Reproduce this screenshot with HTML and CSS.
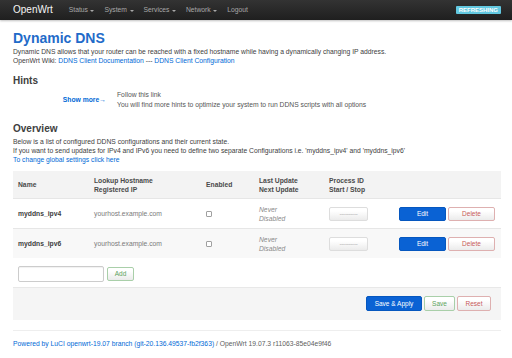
FILE: index.html
```html
<!DOCTYPE html>
<html lang="en">
<head>
<meta charset="utf-8">
<title>Dynamic DNS - OpenWrt</title>
<link rel="stylesheet" href="styles.css">
</head>
<body>
<header class="topbar">
  <div class="topbar-inner">
    <a class="brand" href="#">OpenWrt</a>
    <ul class="nav">
      <li class="nav-item">Status<span class="caret"></span></li>
      <li class="nav-item">System<span class="caret"></span></li>
      <li class="nav-item">Services<span class="caret"></span></li>
      <li class="nav-item">Network<span class="caret"></span></li>
      <li class="nav-item">Logout</li>
    </ul>
    <span class="badge">REFRESHING</span>
  </div>
</header>

<main class="container">
  <h2 class="page-title">Dynamic DNS</h2>
  <div class="text-block">
    <div>Dynamic DNS allows that your router can be reached with a fixed hostname while having a dynamically changing IP address.</div>
    <div>OpenWrt Wiki: <a href="#">DDNS Client Documentation</a> --- <a href="#">DDNS Client Configuration</a></div>
  </div>

  <h3 class="section-title hints-title">Hints</h3>
  <div class="hint-row">
    <div class="hint-label"><a href="#" class="strong-link">Show more→</a></div>
    <div class="hint-field">
      <div>Follow this link</div>
      <div class="hint-desc">You will find more hints to optimize your system to run DDNS scripts with all options</div>
    </div>
  </div>

  <h3 class="section-title overview-title">Overview</h3>
  <div class="text-block overview-text">
    <div>Below is a list of configured DDNS configurations and their current state.</div>
    <div>If you want to send updates for IPv4 and IPv6 you need to define two separate Configurations i.e. 'myddns_ipv4' and 'myddns_ipv6'</div>
    <div><a href="#">To change global settings click here</a></div>
  </div>

  <table class="ddns-table">
    <colgroup>
      <col class="c-name"><col class="c-host"><col class="c-en"><col class="c-upd"><col class="c-pid"><col class="c-act">
    </colgroup>
    <thead>
      <tr class="head-row">
        <th>Name</th>
        <th>Lookup Hostname<br>Registered IP</th>
        <th>Enabled</th>
        <th>Last Update<br>Next Update</th>
        <th>Process ID<br>Start / Stop</th>
        <th></th>
      </tr>
    </thead>
    <tbody>
      <tr class="row">
        <td class="name">myddns_ipv4</td>
        <td class="muted">yourhost.example.com</td>
        <td><input type="checkbox" class="check"></td>
        <td class="state">Never<br>Disabled</td>
        <td><button class="btn btn-pid">----------</button></td>
        <td class="actions"><button class="btn btn-primary btn-edit">Edit</button><button class="btn btn-remove btn-del">Delete</button></td>
      </tr>
      <tr class="row alt">
        <td class="name">myddns_ipv6</td>
        <td class="muted">yourhost.example.com</td>
        <td><input type="checkbox" class="check"></td>
        <td class="state">Never<br>Disabled</td>
        <td><button class="btn btn-pid">----------</button></td>
        <td class="actions"><button class="btn btn-primary btn-edit">Edit</button><button class="btn btn-remove btn-del">Delete</button></td>
      </tr>
    </tbody>
  </table>

  <div class="add-row">
    <input type="text" class="add-input">
    <button class="btn btn-add">Add</button>
  </div>

  <div class="page-actions">
    <button class="btn btn-primary btn-apply">Save &amp; Apply</button>
    <button class="btn btn-add btn-save">Save</button>
    <button class="btn btn-remove btn-reset">Reset</button>
  </div>

  <footer class="footer">
    <a href="#">Powered by LuCI openwrt-19.07 branch (git-20.136.49537-fb2f363)</a> / OpenWrt 19.07.3 r11063-85e04e9f46
  </footer>
</main>
</body>
</html>
```

FILE: styles.css
```css
* { box-sizing: border-box; }

html, body {
  margin: 0;
  padding: 0;
  background: #fff;
}

body {
  font-family: "Liberation Sans", Arial, sans-serif;
  font-size: 6.75px;
  line-height: 9px;
  color: #404040;
}

a {
  color: #0069d6;
  text-decoration: none;
}

/* ---------- top bar ---------- */
.topbar {
  height: 20px;
  background: linear-gradient(#333333, #1f1f1f);
  box-shadow: 0 1px 2px rgba(0, 0, 0, 0.25);
}

.topbar-inner {
  height: 20px;
  padding: 0 11px 0 13px;
  display: flex;
  align-items: center;
}

.brand {
  color: #f5f5f5;
  font-size: 10px;
  line-height: 20px;
  margin-right: 11px;
}

.nav {
  list-style: none;
  margin: 0;
  padding: 0;
  display: flex;
  flex: 1;
}

.nav-item {
  color: #a8a8a8;
  padding: 0 5px;
  line-height: 20px;
  display: flex;
  align-items: center;
}

.caret {
  display: inline-block;
  width: 0;
  height: 0;
  margin-left: 2.5px;
  margin-top: 1px;
  border-top: 2px solid #a8a8a8;
  border-left: 2px solid transparent;
  border-right: 2px solid transparent;
}

.badge {
  background: #62c8e0;
  color: #fff;
  font-weight: bold;
  font-size: 6px;
  line-height: 8px;
  height: 8px;
  padding: 0 3px;
  border-radius: 1px;
}

/* ---------- content ---------- */
.container {
  padding: 0 11px 0 13px;
}

.page-title {
  margin: 9px 0 0;
  font-size: 14px;
  line-height: 18px;
  color: #1f6bc9;
  font-weight: bold;
}

.text-block {
  margin: 0;
}

.section-title {
  font-size: 10px;
  line-height: 13px;
  font-weight: bold;
  color: #404040;
  margin: 0;
}

.hints-title { margin-top: 9px; }

.hint-row {
  display: flex;
  align-items: center;
  margin-top: 3px;
}

.hint-label {
  width: 93px;
  text-align: right;
  flex: none;
}

.strong-link { font-weight: bold; }

.hint-field {
  margin-left: 11px;
  color: #555;
}

.hint-desc { margin-top: 1px; }

.overview-title { margin-top: 13px; }

.overview-text { margin-top: 2px; }

/* ---------- table ---------- */
.ddns-table {
  width: 100%;
  margin-top: 7px;
  border-collapse: collapse;
  table-layout: fixed;
}

.c-name { width: 76px; }
.c-host { width: 112px; }
.c-en { width: 53px; }
.c-upd { width: 70px; }
.c-pid { width: 70px; }
.c-act { width: auto; }

.head-row {
  background: #f3f3f3;
}

.head-row th {
  text-align: left;
  font-weight: bold;
  color: #4a4a4a;
  padding: 4.5px 5px;
  height: 27px;
  vertical-align: middle;
}

.row td {
  padding: 5.5px 5px;
  height: 29px;
  vertical-align: middle;
  border-top: 1px solid #e6e6e6;
}

.row.alt { background: #f8f8f8; }

.name { font-weight: bold; }

.muted { color: #7a7a7a; }

.state {
  color: #8a8a8a;
  font-style: italic;
}

.check {
  -webkit-appearance: none;
  appearance: none;
  width: 6px;
  height: 6px;
  margin: 0;
  border: 1px solid #a0a0a0;
  border-radius: 1px;
  background: #fff;
  display: block;
}

/* ---------- buttons ---------- */
.btn {
  font-family: "Liberation Sans", Arial, sans-serif;
  font-size: 6.5px;
  line-height: 8px;
  height: 14px;
  padding: 0 5px;
  border: 1px solid #cccccc;
  border-radius: 2px;
  background: linear-gradient(#ffffff, #ffffff 25%, #ebebeb);
  color: #404040;
  cursor: pointer;
  vertical-align: middle;
}

.btn-pid {
  width: 39px;
  color: #9a9a9a;
  border-color: #dddddd;
  letter-spacing: -0.2px;
  font-size: 6px;
}

.btn-primary {
  background: #0a62d4;
  border-color: #0657bf;
  color: #fff;
}

.btn-remove {
  color: #c85a5a;
  border-color: #deb0b0;
}

.btn-add {
  color: #5da35d;
  border-color: #a9cfa9;
}

.actions {
  padding-right: 6px;
}

.btn-edit,
.btn-del {
  width: 47px;
}

.btn-del { margin-left: 2px; }

/* ---------- add row ---------- */
.add-row {
  display: flex;
  align-items: center;
  padding-left: 5px;
  margin-top: 8px;
}

.add-input {
  width: 86px;
  height: 16px;
  border: 1px solid #cccccc;
  border-radius: 2px;
  margin: 0;
  padding: 0 3px;
  font-size: 6.5px;
  box-shadow: inset 0 1px 1px rgba(0, 0, 0, 0.06);
}

.add-row .btn-add {
  width: 27px;
  margin-left: 3px;
}

/* ---------- page actions ---------- */
.page-actions {
  margin-top: 5px;
  background: #f5f5f5;
  border-top: 1px solid #e8e8e8;
  padding: 8px 10px 9px;
  display: flex;
  justify-content: flex-end;
  gap: 2px;
}

.page-actions .btn { height: 15px; }

.btn-apply { width: 56px; }
.btn-save { width: 31px; }
.btn-reset { width: 34px; }

/* ---------- footer ---------- */
.footer {
  margin-top: 10px;
  border-top: 1px solid #eeeeee;
  padding-top: 8px;
  color: #606060;
}
```
